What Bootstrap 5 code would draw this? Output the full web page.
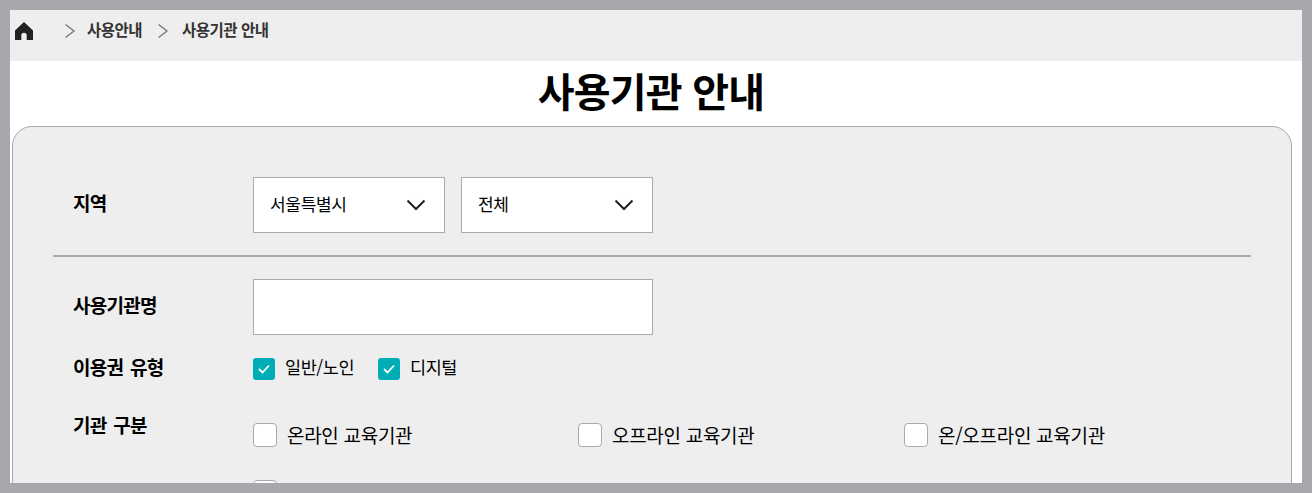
<!DOCTYPE html>
<html lang="ko">
<head>
<meta charset="utf-8">
<title>사용기관 안내</title>
<link href="https://cdn.jsdelivr.net/npm/bootstrap@5.3.0/dist/css/bootstrap.min.css" rel="stylesheet">
<style>
html,body{height:493px;overflow:hidden;margin:0}
body{font-family:"Noto Sans CJK KR","Liberation Sans",sans-serif;background:#fff;color:#000}
.frame{height:493px;border:10px solid #a7a8ab;overflow:hidden;background:#fff}
.crumbs{height:51px;background:#eee;color:#333;font-size:15.500px;font-weight:700;letter-spacing:-.5px;padding:0 0 10px 3px}
.crumbs svg{flex:none}
.crumb-gap1{margin-left:29px;margin-right:11px}
.crumb-gap2{margin-left:15px;margin-right:13px}
.crumb-txt{position:relative;top:-1px}
.ttl{font-size:40px;font-weight:700;line-height:58px;height:65px;margin:0;letter-spacing:-.8px;text-align:center;padding-right:10px}
.panel{margin:0 10px 0 2px;background:#eee;border:1px solid #aaa;border-radius:20px 20px 0 0;height:400px;padding:50px 40px 0}
.lbl{width:200px;flex:none;padding-left:20px;font-size:19px;font-weight:700;letter-spacing:-.7px;word-spacing:2px}
.lbl-up{position:relative;top:-2px}
.pick{height:56px;width:192px;background:#fff;border:1px solid #aaa;font-size:17px;padding:0 18px 0 16px;letter-spacing:-.3px}
.pick-txt{position:relative;top:-1px}
.sel-row{height:56px}
.rule{height:2px;background:#aaa;margin:22px 0}
.name-row{height:56px}
.txt-in{width:400px;height:56px;background:#fff;border:1px solid #aaa}
.type-row{height:32px;margin-top:18px}
.tick{width:22px;height:22px;border-radius:3px;background:#00adb5;flex:none}
.tick-txt{font-size:17.500px;letter-spacing:-.45px;margin-left:10px;position:relative;top:-2px}
.kind-row{margin-top:30px}
.kind-lbl{position:relative;top:-4px}
.box{width:24px;height:24px;background:#fff;border:1px solid #aaa;border-radius:4px;flex:none}
.kind-item{width:325px;height:24px}
.kind-wide{width:326px}
.kind-txt{font-size:19px;letter-spacing:-.3px;margin-left:10px}
.kind-list{padding-top:8px}
.last-row{margin:33px 0 0 200px}
</style>
</head>
<body>
<div class="frame">
  <nav class="crumbs d-flex align-items-center">
    <svg width="22" height="22" viewBox="0 0 22 22" aria-hidden="true"><path fill="#222" d="M11 2 2 10.500V20h6.300v-4.500a2.700 2.700 0 0 1 5.400 0V20H20v-9.500Z"/></svg>
    <svg class="crumb-gap1" width="12" height="16" viewBox="0 0 12 16" aria-hidden="true"><path d="M1.500 1.500 10 8l-8.500 6.500" fill="none" stroke="#777" stroke-width="1.300"/></svg>
    <span class="crumb-txt">사용안내</span>
    <svg class="crumb-gap2" width="12" height="16" viewBox="0 0 12 16" aria-hidden="true"><path d="M1.500 1.500 10 8l-8.500 6.500" fill="none" stroke="#777" stroke-width="1.300"/></svg>
    <span class="crumb-txt">사용기관 안내</span>
  </nav>
  <h1 class="ttl">사용기관 안내</h1>
  <section class="panel">
    <div class="d-flex align-items-center sel-row">
      <div class="lbl lbl-up">지역</div>
      <div class="d-flex gap-3">
        <div class="pick d-flex align-items-center justify-content-between"><span class="pick-txt">서울특별시</span>
          <svg width="20" height="12" viewBox="0 0 20 12" aria-hidden="true"><path d="M1.500 1.500 10 10l8.500-8.500" fill="none" stroke="#222" stroke-width="2"/></svg></div>
        <div class="pick d-flex align-items-center justify-content-between"><span class="pick-txt">전체</span>
          <svg width="20" height="12" viewBox="0 0 20 12" aria-hidden="true"><path d="M1.500 1.500 10 10l8.500-8.500" fill="none" stroke="#222" stroke-width="2"/></svg></div>
      </div>
    </div>
    <div class="rule"></div>
    <div class="d-flex align-items-center name-row">
      <div class="lbl lbl-up">사용기관명</div>
      <div class="txt-in"></div>
    </div>
    <div class="d-flex align-items-center type-row">
      <div class="lbl lbl-up">이용권 유형</div>
      <div class="d-flex align-items-center">
        <span class="tick d-flex align-items-center justify-content-center"><svg width="12" height="10" viewBox="0 0 12 10" aria-hidden="true"><path d="M1 5l3.500 3.500L11 1.500" fill="none" stroke="#fff" stroke-width="1.800"/></svg></span>
        <span class="tick-txt">일반/노인</span>
        <span class="tick d-flex align-items-center justify-content-center ms-4"><svg width="12" height="10" viewBox="0 0 12 10" aria-hidden="true"><path d="M1 5l3.500 3.500L11 1.500" fill="none" stroke="#fff" stroke-width="1.800"/></svg></span>
        <span class="tick-txt">디지털</span>
      </div>
    </div>
    <div class="d-flex kind-row">
      <div class="lbl kind-lbl">기관 구분</div>
      <div class="d-flex kind-list">
        <div class="kind-item d-flex align-items-center"><span class="box"></span><span class="kind-txt">온라인 교육기관</span></div>
        <div class="kind-item kind-wide d-flex align-items-center"><span class="box"></span><span class="kind-txt">오프라인 교육기관</span></div>
        <div class="kind-item d-flex align-items-center"><span class="box"></span><span class="kind-txt">온/오프라인 교육기관</span></div>
      </div>
    </div>
    <div class="last-row d-flex align-items-center"><span class="box"></span></div>
  </section>
</div>
<script src="https://cdn.jsdelivr.net/npm/bootstrap@5.3.0/dist/js/bootstrap.bundle.min.js"></script>
</body>
</html>
